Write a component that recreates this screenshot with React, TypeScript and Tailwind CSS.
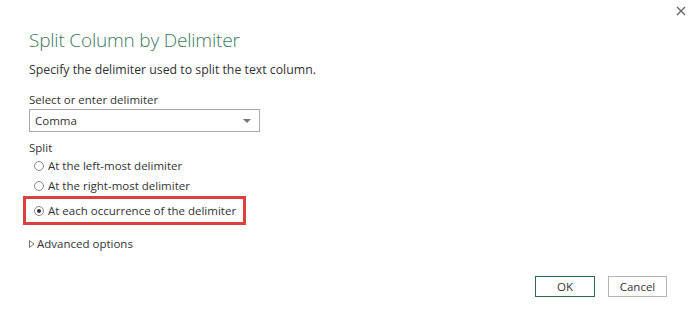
export default function App() {
  return (
    <div className="relative w-[695px] h-[325px] bg-white text-[#333] font-['Open_Sans',sans-serif] overflow-hidden">
      {/* Close */}
      <button className="absolute top-[6px] right-[9px] w-[10px] h-[10px] text-[#666]">
        <svg viewBox="0 0 10 10" className="w-[10px] h-[10px]">
          <path d="M1 1L9 9M9 1L1 9" stroke="currentColor" strokeWidth="1.4" />
        </svg>
      </button>

      <div className="flex flex-col pl-[29px] pt-[27px]">
        <h1 className="text-[19px] leading-[26px] font-light text-[#3d7a60] tracking-[-0.2px] whitespace-nowrap">Split Column by Delimiter</h1>
        <p className="mt-[8px] text-[12.3px] leading-[18px] text-[#333] whitespace-nowrap">Specify the delimiter used to split the text column.</p>

        <label className="mt-[13px] text-[11.5px] leading-[16px]">Select or enter delimiter</label>
        <div className="mt-[1px] w-[231px] h-[23px] border border-[#a9a9a9] flex items-center justify-between pl-[5px] pr-[8px] text-[11.5px]">
          <span>Comma</span>
          <svg viewBox="0 0 8 4" className="w-[8px] h-[4px]">
            <path d="M0 0H8L4 4Z" fill="#777" />
          </svg>
        </div>

        <div className="mt-[8px] text-[11.5px] leading-[16px]">Split</div>
        <div className="flex flex-col text-[11.5px] whitespace-nowrap">
          <Radio label="At the left-most delimiter" />
          <Radio label="At the right-most delimiter" />
          <div className="-ml-[6px] w-[223px] h-[29px] border-[3px] border-[#d9423f] flex items-center pl-[3px]">
            <Radio label="At each occurrence of the delimiter" checked />
          </div>
        </div>

        <div className="mt-[11px] flex items-center gap-[2px] text-[11.5px] leading-[16px]">
          <svg viewBox="0 0 6 8" className="w-[6px] h-[8px]">
            <path d="M0.5 0.5L5 4L0.5 7.5Z" fill="none" stroke="#666" strokeWidth="0.9" />
          </svg>
          <span>Advanced options</span>
        </div>
      </div>

      <div className="absolute left-[535px] top-[276px] flex gap-[13px] text-[11.5px]">
        <button className="w-[60px] h-[21px] border border-[#2e6b4e] bg-white text-[#333]">OK</button>
        <button className="w-[59px] h-[21px] border border-[#b5b5b5] bg-white text-[#333]">Cancel</button>
      </div>
    </div>
  );
}

function Radio({ label, checked = false }: { label: string; checked?: boolean }) {
  return (
    <div className="flex items-center h-[20px] pl-[5px] gap-[4px]">
      <span className="w-[10px] h-[10px] rounded-full border border-[#888] flex items-center justify-center">
        {checked && <span className="w-[4px] h-[4px] rounded-full bg-[#333]" />}
      </span>
      <span>{label}</span>
    </div>
  );
}
